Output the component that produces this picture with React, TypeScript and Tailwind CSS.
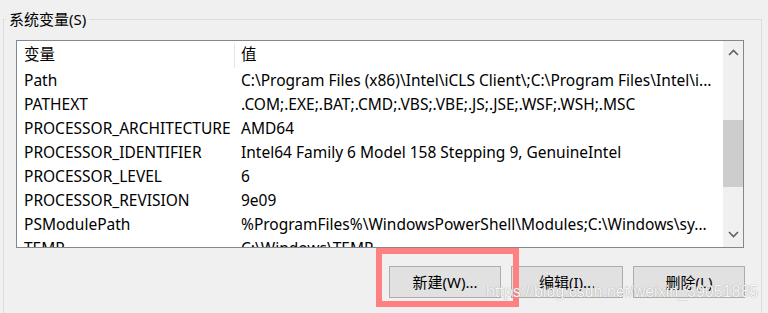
import type { ReactNode } from "react";

const rows = [
  {
    name: "Path",
    value:
      "C:\\Program Files (x86)\\Intel\\iCLS Client\\;C:\\Program Files\\Intel\\i...",
  },
  { name: "PATHEXT", value: ".COM;.EXE;.BAT;.CMD;.VBS;.VBE;.JS;.JSE;.WSF;.WSH;.MSC" },
  { name: "PROCESSOR_ARCHITECTURE", value: "AMD64" },
  {
    name: "PROCESSOR_IDENTIFIER",
    value: "Intel64 Family 6 Model 158 Stepping 9, GenuineIntel",
  },
  { name: "PROCESSOR_LEVEL", value: "6" },
  { name: "PROCESSOR_REVISION", value: "9e09" },
  {
    name: "PSModulePath",
    value: "%ProgramFiles%\\WindowsPowerShell\\Modules;C:\\Windows\\sy...",
  },
  { name: "TEMP", value: "C:\\Windows\\TEMP" },
];

function Chevron({ up }: { up?: boolean }) {
  return (
    <svg width="11" height="7" viewBox="0 0 11 7" className="text-[#606060]">
      <path
        d={up ? "M1 6 L5.5 1.5 L10 6" : "M1 1 L5.5 5.5 L10 1"}
        fill="none"
        stroke="currentColor"
        strokeWidth="1.6"
      />
    </svg>
  );
}

function WinButton({ children }: { children: ReactNode }) {
  return (
    <button className="h-[32px] w-[112px] border border-[#adadad] bg-[#e1e1e1] text-[15px] text-black">
      {children}
    </button>
  );
}

export default function App() {
  return (
    <div
      className="relative h-[313px] w-[768px] overflow-hidden bg-[#f0f0f0] pt-[10px] text-black"
      style={{ fontFamily: '"Noto Sans", "Noto Sans CJK SC", sans-serif' }}
    >
      <fieldset className="ml-[3px] w-[759px] border border-[#dcdcdc] pb-[20px] pl-[12px] pr-[16px]">
        <legend className="-ml-[10px] px-[3px] text-[15px] leading-[18px]">系统变量(S)</legend>

        {/* list view */}
        <div className="mt-[12px] flex h-[208px] w-[728px] border border-[#828790] bg-white">
          <div className="flex-1 overflow-hidden text-[15.5px]">
            <div className="flex h-[27px] items-center pt-[1px]">
              <div className="w-[217px] pl-[7px]">变量</div>
              <div className="h-[25px] w-px bg-[#e5e5e5]" />
              <div className="pl-[6px]">值</div>
            </div>
            {rows.map((row) => (
              <div key={row.name} className="flex h-[24px] items-center whitespace-nowrap pt-[1px]">
                <div className="w-[218px] shrink-0 pl-[7px]">{row.name}</div>
                <div className="overflow-hidden pl-[6px]">{row.value}</div>
              </div>
            ))}
          </div>
          <div className="flex w-[20px] flex-col bg-[#f0f0f0]">
            <div className="flex h-[21px] items-center justify-center pt-[2px]">
              <Chevron up />
            </div>
            <div className="mt-[58px] h-[67px] bg-[#cdcdcd]" />
            <div className="flex-1" />
            <div className="flex h-[21px] items-center justify-center pb-[4px]">
              <Chevron />
            </div>
          </div>
        </div>

        <div className="mt-[18px] flex w-[729px] justify-end gap-[10px]">
          <div className="relative">
            <WinButton>新建(W)...</WinButton>
            <div className="pointer-events-none absolute -left-[13px] -top-[18px] h-[59px] w-[143px] border-[6px] border-[#ff8080]" />
          </div>
          <WinButton>编辑(I)...</WinButton>
          <WinButton>删除(L)</WinButton>
        </div>
      </fieldset>

      <div
        className="pointer-events-none absolute left-[486px] top-[281px] whitespace-nowrap text-[16px] leading-[22px] text-[#f7f7f7] [text-shadow:0_0_1px_#8a8a8a]"
        style={{ fontFamily: '"Liberation Sans", sans-serif' }}
      >
        https://blog.csdn.net/weixin_39051885
      </div>
    </div>
  );
}
